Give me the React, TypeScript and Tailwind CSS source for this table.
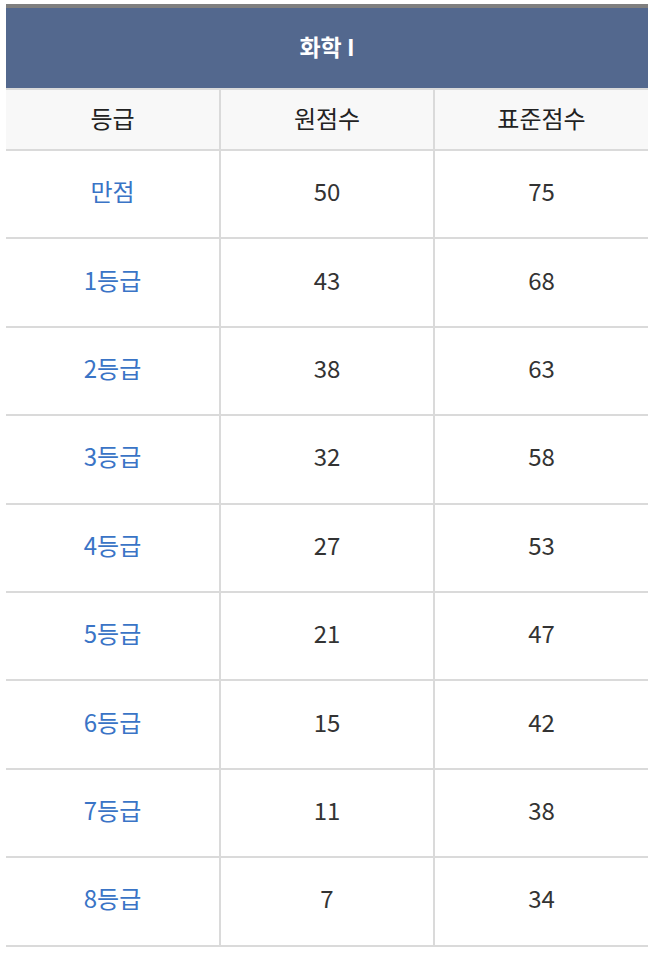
const rows = [
  ["만점", "50", "75"],
  ["1등급", "43", "68"],
  ["2등급", "38", "63"],
  ["3등급", "32", "58"],
  ["4등급", "27", "53"],
  ["5등급", "21", "47"],
  ["6등급", "15", "42"],
  ["7등급", "11", "38"],
  ["8등급", "7", "34"],
];

export default function App() {
  return (
    <div className="min-h-[956px] bg-white pt-1 px-[6px] font-['Noto_Sans_CJK_KR','Noto_Sans',sans-serif]">
      <table className="w-[642px] table-fixed border-collapse text-center">
        <thead>
          <tr>
            <th
              colSpan={3}
              className="h-[83px] border-t-4 border-[#7f7f7f] bg-[#53688e] pb-[3px] text-[23px] font-bold text-white"
            >
              화학 I
            </th>
          </tr>
          <tr className="bg-[#f8f8f8]">
            {["등급", "원점수", "표준점수"].map((h) => (
              <th
                key={h}
                className="h-[61px] border-2 border-[#dadada] pb-[4px] text-[24px] font-normal text-[#222] first:border-l-0 last:border-r-0"
              >
                {h}
              </th>
            ))}
          </tr>
        </thead>
        <tbody>
          {rows.map((r) => (
            <tr key={r[0]}>
              <td className="h-[88.4px] border-2 border-l-0 border-[#dadada] pb-[6px] text-[24px] text-[#3a74c6]">
                {r[0]}
              </td>
              <td className="border-2 border-[#dadada] pb-[6px] text-[24px] text-[#333]">{r[1]}</td>
              <td className="border-2 border-r-0 border-[#dadada] pb-[6px] text-[24px] text-[#333]">{r[2]}</td>
            </tr>
          ))}
        </tbody>
      </table>
    </div>
  );
}
